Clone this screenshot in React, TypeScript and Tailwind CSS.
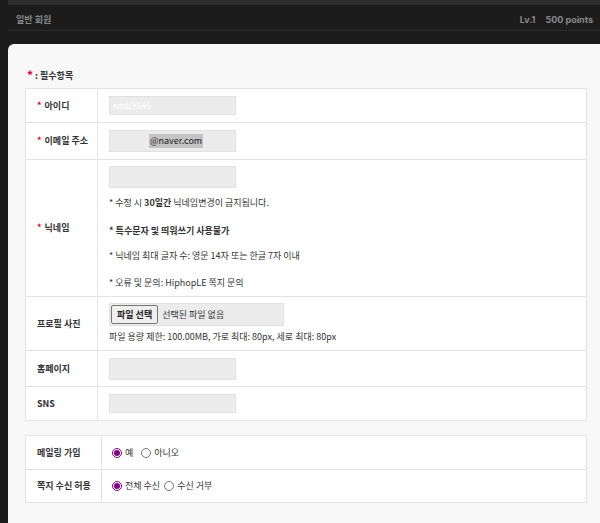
import React from "react";

const font = { fontFamily: '"Noto Sans CJK KR", "Noto Sans", sans-serif' };

function Star() {
  return <span className="text-[#e4002b] mr-[3px] font-bold">*</span>;
}

function Row({
  label,
  required,
  children,
  last,
  labelW = "w-[72px]",
}: {
  label: string;
  required?: boolean;
  children: React.ReactNode;
  last?: boolean;
  labelW?: string;
}) {
  return (
    <div className={`flex ${last ? "" : "border-b border-[#e3e3e3]"}`}>
      <div className={`${labelW} shrink-0 flex items-center pl-[11px] border-r border-[#e3e3e3] text-[9px] font-bold text-[#333]`}>
        {required && <Star />}
        {label}
      </div>
      <div className="flex-1 pl-[11px]">{children}</div>
    </div>
  );
}

function Field({ h = "h-[19px]", children }: { h?: string; children?: React.ReactNode }) {
  return (
    <div className={`w-[127px] ${h} bg-[#ececec] border border-[#e2e2e2] flex items-center text-[9px]`}>
      {children}
    </div>
  );
}

function Radio({ checked, label }: { checked?: boolean; label: string }) {
  return (
    <label className="flex items-center">
      <input
        type="radio"
        defaultChecked={checked}
        name={label}
        className="m-0 w-[10px] h-[10px] accent-[#800080]"
      />
      <span className="ml-[3px]">{label}</span>
    </label>
  );
}

export default function App() {
  return (
    <div className="w-[600px] h-[523px] overflow-hidden bg-[#1c1c1c]" style={font}>
      <div className="ml-2 h-[5px] bg-[#2e2e2e]" />
      <div
        className="ml-2 h-[26px] border-b border-[#2b2b2b] flex items-center justify-between pl-2 pr-[7px] text-[9px] font-bold text-[#8a8a8a]"
        style={{ fontFamily: 'Inter, "Noto Sans CJK KR", sans-serif' }}
      >
        <span className="pt-[4px]">일반 회원</span>
        <span className="flex gap-[10px] pt-[4px]">
          <span>Lv.1</span>
          <span>500 points</span>
        </span>
      </div>
      <div className="ml-2 mt-[13px] rounded-tl-[6px] bg-[#f8f8f8] pl-[17px] pr-[13px] pt-[24px] h-[600px]">
        <div className="pl-[2px] h-[16px] flex items-center text-[9px] font-bold text-[#333] mb-[4px]">
          <span className="text-[#e4002b] text-[12px] -mt-[3px] mr-[2px]">*</span>
          <span>: 필수항목</span>
        </div>
        <div className="bg-white border border-[#e3e3e3] text-[9px] text-[#333]">
          <Row label="아이디" required>
            <div className="h-[33px] flex items-center">
              <Field>
                <span className="pl-[3px] text-white">smb9846</span>
              </Field>
            </div>
          </Row>
          <Row label="이메일 주소" required>
            <div className="h-[36px] flex items-center">
              <Field h="h-[22px]">
                <span className="ml-[39px] bg-[#c4c4c4] px-[1px] text-[#222]">@naver.com</span>
              </Field>
            </div>
          </Row>
          <Row label="닉네임" required>
            <div className="pt-[6px] pb-[6px] leading-[14px] text-[#333]">
              <Field h="h-[22px]" />
              <p className="mt-[8px]">
                * 수정 시 <b>30일간</b> 닉네임변경이 금지됩니다.
              </p>
              <p className="mt-[14px] font-bold">* 특수문자 및 띄워쓰기 사용불가</p>
              <p className="mt-[11px]">* 닉네임 최대 글자 수: 영문 14자 또는 한글 7자 이내</p>
              <p className="mt-[13px]">* 오류 및 문의: HiphopLE 쪽지 문의</p>
            </div>
          </Row>
          <Row label="프로필 사진">
            <div className="pt-[6px] pb-[6px]">
              <div className="w-[175px] h-[23px] bg-[#ececec] border border-[#e2e2e2] flex items-center">
                <span className="ml-[1px] h-[19px] px-[5px] flex items-center bg-[#efefef] border border-[#767676] rounded-[2px] font-bold text-[#222]">
                  파일 선택
                </span>
                <span className="ml-[4px] text-[#333]">선택된 파일 없음</span>
              </div>
              <p className="mt-[4px] leading-[14px]">파일 용량 제한: 100.00MB, 가로 최대: 80px, 세로 최대: 80px</p>
            </div>
          </Row>
          <Row label="홈페이지">
            <div className="h-[35px] flex items-center">
              <Field h="h-[22px]" />
            </div>
          </Row>
          <Row label="SNS" last>
            <div className="h-[33px] flex items-center">
              <Field />
            </div>
          </Row>
        </div>
        <div className="mt-[14px] bg-white border border-[#e3e3e3] text-[9px] text-[#333]">
          <Row label="메일링 가입" labelW="w-[76px]">
            <div className="h-[33px] flex items-center gap-[8px] -ml-[1px]">
              <Radio checked label="예" />
              <Radio label="아니오" />
            </div>
          </Row>
          <Row label="쪽지 수신 허용" labelW="w-[76px]" last>
            <div className="h-[32px] flex items-center gap-[4px] -ml-[1px]">
              <Radio checked label="전체 수신" />
              <Radio label="수신 거부" />
            </div>
          </Row>
        </div>
      </div>
    </div>
  );
}
